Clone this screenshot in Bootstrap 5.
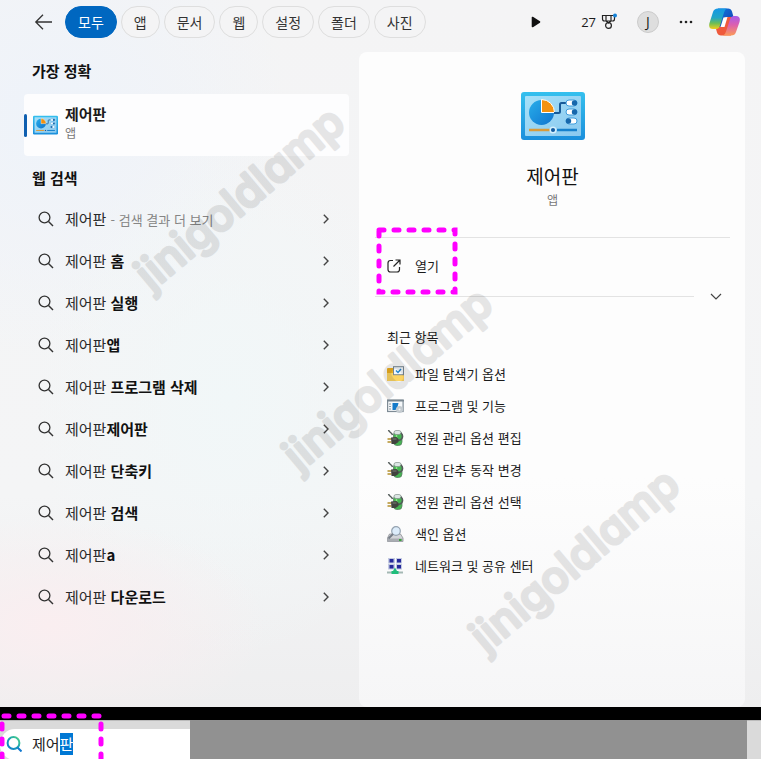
<!DOCTYPE html>
<html lang="ko">
<head>
<meta charset="utf-8">
<meta name="viewport" content="width=device-width, initial-scale=1">
<title>제어판 - 검색</title>
<link rel="stylesheet" href="https://cdn.jsdelivr.net/npm/bootstrap@5.3.0/dist/css/bootstrap.min.css">
<style>
body{font-family:"Noto Sans CJK KR","Noto Sans",sans-serif;font-size:15px;line-height:22px;color:#1b1b1b;background:#000;overflow-x:hidden}
button{font-family:inherit}
.flyout{background:
 radial-gradient(ellipse 220px 110px at 50px 625px,#faeef0 0,#faeef000 100%),
 radial-gradient(ellipse 200px 260px at 230px 400px,#f1f7f8 0,#f1f7f800 100%),
 radial-gradient(ellipse 240px 240px at 50px 120px,#eef3fa 0,#eef3fa00 100%),
 linear-gradient(#f4f4f5 0,#f4f5f6 70%,#eeeeef 100%)}
.topbar{height:43px;padding:0 21px 0 34px}
.pill{height:32px;padding:0 12px;border:1px solid #dedede;border-radius:16px;background:#f4f4f5;color:#333;font-size:14px;line-height:28px}
.pill.active{background:#0067c0;border-color:#0067c0;color:#fff}
.plain{border:0;background:none;padding:0;color:#1b1b1b;display:flex;align-items:center}
.tools{margin-left:auto}
.avatar{width:22px;height:22px;border-radius:50%;background:#dedede;border:1px solid #cbcbcb;justify-content:center;font:14px/20px "Open Sans",sans-serif}
.points{font:13px/20px "Open Sans",sans-serif;gap:5px}
.panes{display:grid;grid-template-columns:minmax(0,359fr) minmax(0,386fr);margin:9px 16px 0 0}
.results{padding:8px 10px 40px 24px}
.results h2{font-size:15px;line-height:22px;font-weight:700;margin:0 0 0 8px;color:#111}
.best{width:100%;height:62px;margin:12px 0 11px;background:#fdfdfe;border-radius:4px;text-align:left;gap:7px}
.accent{width:3px;height:23px;background:#0f5fb0;border-radius:2px;margin-right:-1px}
.best strong{display:block;line-height:20px}
.best .names{padding-bottom:4px}
.tiny{display:block;font-size:12px;line-height:18px;color:#777}
.hits{padding-top:9px}
.hit{height:42px;width:100%;padding:0 20px 0 14px;text-align:left;gap:11px}
.hit .words{flex:1;color:#2a2a2a;white-space:nowrap;line-height:22px}
.hit b{color:#111}
.more{font-size:13px;color:#858585}
.detail{padding:40px 15px 20px 16px;border-radius:8px;background:linear-gradient(#fdfdfd 0,#fdfdfd 65%,#f6f6f7 100%)}
.detail h1{font-size:19px;line-height:24px;font-weight:400;margin:24px 0 3px;color:#111}
.rule{border-top:1px solid #e3e3e3}
.open-row{height:55px;padding-left:12px}
.open-btn{gap:14px;height:32px;font-size:13px}
.recent h3{font-size:13px;line-height:22px;font-weight:400;margin:26px 0 10px 12px}
.recent-item{height:32px;padding-left:12px;gap:11px;font-size:13px}
.dash{fill:none;stroke:#f0f;stroke-width:5;stroke-linecap:round;stroke-dasharray:5 10}
.mark-open{position:absolute;left:0;top:-12px}
.taskbar{display:grid;grid-template-columns:minmax(0,190fr) minmax(0,557fr);margin-top:13px;height:39px;background:#dadada;border-top:1px solid #bbb;padding-right:14px}
.searchbox{height:31px;margin-top:8px;background:#fff;border-radius:15px 0 0 15px;padding:0 0 2px 6px;gap:10px}
.searchbox input{border:0;outline:0;padding:0;min-width:0;width:100%;background:none;color:#222;font:15px/22px "Noto Sans CJK KR",sans-serif}
.searchbox input::selection{background:#0078d4;color:#fff}
.masked{background:#919191;margin-top:-1px}
.mark-search{position:absolute;left:0;bottom:0}
.wm{position:absolute;width:280px;height:280px;pointer-events:none;opacity:.09}
.wm text{font:500 44px Inter,sans-serif;font-feature-settings:"cv11";stroke:#000;stroke-width:3;stroke-linejoin:round;text-anchor:middle}
.wm1{left:103px;top:62px}.wm2{left:251px;top:243px}.wm3{left:438px;top:424px}
</style>
<script src="https://cdn.jsdelivr.net/npm/bootstrap@5.3.0/dist/js/bootstrap.bundle.min.js"></script>
</head>
<body class="min-vh-100 d-flex flex-column position-relative">
<svg width="0" height="0" class="position-absolute" aria-hidden="true">
 <defs>
  <linearGradient id="gFrame" x2="0" y2="1"><stop stop-color="#35c0ee"/><stop offset="1" stop-color="#1b8fdc"/></linearGradient>
  <linearGradient id="gScreen" x2="1" y2="1"><stop stop-color="#a5e0f8"/><stop offset="1" stop-color="#8bc9ef"/></linearGradient>
  <linearGradient id="gPie" x2="1" y2="1"><stop stop-color="#28aeea"/><stop offset="1" stop-color="#0f74cf"/></linearGradient>
  <linearGradient id="gA" x2="0" y2="1"><stop stop-color="#1597e5"/><stop offset=".45" stop-color="#22a6c6"/><stop offset=".72" stop-color="#6dbd55"/><stop offset="1" stop-color="#f2ce1c"/></linearGradient>
  <linearGradient id="gB" x2="0" y2="1"><stop stop-color="#a85bea"/><stop offset=".45" stop-color="#dc5fb0"/><stop offset="1" stop-color="#fb9a58"/></linearGradient>
  <linearGradient id="gC" x2="1" y2="1"><stop stop-color="#0f7be0"/><stop offset="1" stop-color="#173cae"/></linearGradient>
  <linearGradient id="gLens" x1="1" x2="0" y2="1"><stop stop-color="#50d486"/><stop offset=".5" stop-color="#16a0b5"/><stop offset="1" stop-color="#1279cf"/></linearGradient>
  <symbol id="cpl" viewBox="0 0 64 48">
   <rect width="64" height="48" rx="3" fill="url(#gFrame)"/><rect x="4" y="4" width="56" height="40" rx="1" fill="url(#gScreen)"/>
   <circle cx="20.500" cy="20.500" r="12.500" fill="url(#gPie)"/><path d="M20.500 7.500a13 13 0 0 1 13 13h-13z" fill="#f3920f" stroke="#fff"/>
   <path d="M33 21h4.500q1.500 0 1.500-1.500v-7q0-1.500 1.500-1.500H45" fill="none" stroke="#175b99" stroke-width="2"/>
   <g stroke="#3f9ddd"><rect x="45" y="8" width="11" height="6" rx="3" fill="#fff"/><rect x="45" y="17" width="11" height="6" rx="3" fill="#fff"/><rect x="45" y="26" width="11" height="6" rx="3" fill="#fff"/></g>
   <circle cx="53.500" cy="11" r="2.700" fill="#1768ac"/><circle cx="53.500" cy="20" r="2.700" fill="#1768ac"/><circle cx="47.500" cy="29" r="2.700" fill="#1768ac"/>
   <path d="M8 38h22" stroke="#d99b3a" stroke-width="2.500"/><path d="M36 38h20" stroke="#1681cd" stroke-width="2.500"/><circle cx="32" cy="38" r="2.800" fill="#145ca2" stroke="#d3effd" stroke-width="1.500"/>
  </symbol>
  <symbol id="lens" viewBox="0 0 16 16"><circle cx="6.500" cy="6.500" r="5.400" fill="none" stroke="#333" stroke-width="1.300"/><path d="M10.500 10.500 15 15" stroke="#333" stroke-width="1.400"/></symbol>
  <symbol id="chev" viewBox="0 0 6 10"><path d="M.8.800 5 5 .800 9.200" fill="none" stroke="#444" stroke-width="1.400"/></symbol>
  <symbol id="plug" viewBox="0 0 16 16">
   <rect x="6" y="1.500" width="8.500" height="14" rx="3.500" fill="#45b451" stroke="#5c8064" stroke-width=".8"/><rect x="6.500" y=".5" width="7" height="4" rx="2" fill="#dce6e4" stroke="#85928d" stroke-width=".7"/><path d="M9 5v4" stroke="#8be886" stroke-width="1.500"/>
   <path d="M1 0c1 3 3 2 4 5M13.500 3c3 3 1.500 7-3 7.500" fill="none" stroke="#535b59" stroke-width="1.500"/>
   <path d="M0 9h4M0 12h4" stroke="#b28f2b" stroke-width="1.600"/><path d="M3.500 7.500 9 7l2 2v3l-3 2H4z" fill="#41433f"/><path d="M5 9h4" stroke="#7c7f79"/>
  </symbol>
 </defs>
</svg>

<main class="flyout flex-grow-1 d-flex flex-column">
 <header class="topbar d-flex align-items-center">
  <button class="plain" aria-label="뒤로"><svg width="19" height="16" viewBox="0 0 19 16" fill="none" stroke="#333" stroke-width="1.300"><path d="M18 8H2M9 .8 1.800 8 9 15.200"/></svg></button>
  <nav class="d-flex gap-1 ms-2 ps-1" aria-label="범위">
   <button class="pill active">모두</button><button class="pill">앱</button><button class="pill">문서</button><button class="pill">웹</button><button class="pill">설정</button><button class="pill">폴더</button><button class="pill">사진</button>
  </nav>
  <div class="tools d-flex align-items-center">
   <button class="plain me-4" aria-label="더 많은 범위"><svg width="10" height="12" viewBox="0 0 10 12"><path d="M1.500 1.500v9L8.500 6z" fill="#111" stroke="#111" stroke-width="1.600" stroke-linejoin="round"/></svg></button>
   <button class="plain points ms-3 me-3"><span>27</span><svg width="16" height="17" viewBox="0 0 16 17" fill="none" stroke="#222" stroke-width="1.200"><path d="M1.500 2.500h12v3.500q0 2-2 2h-8q-2 0-2-2zM5 2.500V8l2.500 2L10 8V2.500"/><circle cx="7.500" cy="12.500" r="2.900"/><circle cx="14" cy="2.500" r="2" fill="#1683d8" stroke="none"/></svg></button>
   <button class="plain avatar ms-1" aria-label="계정 J">J</button>
   <button class="plain mx-3 ps-1" aria-label="옵션"><svg width="14" height="4" fill="#222"><circle cx="2" cy="2" r="1.300"/><circle cx="7" cy="2" r="1.300"/><circle cx="12" cy="2" r="1.300"/></svg></button>
   <button class="plain" aria-label="Copilot"><svg width="31" height="28" viewBox="0 0 31 28">
    <path d="M9 .5h10q3 0 4 3l1.500 5.500H21q-3 0-4 3l-2 7H8z" fill="url(#gC)"/>
    <path d="M22 27.500H12q-3 0-4-3L6.500 19H10q3 0 4-3l2-7h7z" fill="#ef5a3c"/>
    <path d="m14.500 9.500 4-.5-3 10h-4z" fill="#fff"/>
    <path d="M9 .5h9q-2 .5-3 4l-4 13q-1 3.500-4 3.500H4q-5 0-3.500-6L4 4q1-3.500 5-3.500z" fill="url(#gA)"/>
    <path d="M22 27.500h-8q2-.5 3-4l4-12q1-3.500 4-3.500h2q5 0 3.500 6L27 24q-1 3.500-5 3.500z" fill="url(#gB)"/></svg></button>
  </div>
 </header>

 <div class="panes flex-grow-1">
  <section class="results">
   <h2>가장 정확</h2>
   <button class="plain best"><span class="accent"></span><svg width="25" height="20"><use href="#cpl"/></svg><span class="names"><strong>제어판</strong><span class="tiny">앱</span></span></button>
   <h2>웹 검색</h2>
   <div class="hits">
    <button class="plain hit"><svg width="16" height="16"><use href="#lens"/></svg><span class="words">제어판 <span class="more">- 검색 결과 더 보기</span></span><svg width="6" height="10"><use href="#chev"/></svg></button>
    <button class="plain hit"><svg width="16" height="16"><use href="#lens"/></svg><span class="words">제어판 <b>홈</b></span><svg width="6" height="10"><use href="#chev"/></svg></button>
    <button class="plain hit"><svg width="16" height="16"><use href="#lens"/></svg><span class="words">제어판 <b>실행</b></span><svg width="6" height="10"><use href="#chev"/></svg></button>
    <button class="plain hit"><svg width="16" height="16"><use href="#lens"/></svg><span class="words">제어판<b>앱</b></span><svg width="6" height="10"><use href="#chev"/></svg></button>
    <button class="plain hit"><svg width="16" height="16"><use href="#lens"/></svg><span class="words">제어판 <b>프로그램 삭제</b></span><svg width="6" height="10"><use href="#chev"/></svg></button>
    <button class="plain hit"><svg width="16" height="16"><use href="#lens"/></svg><span class="words">제어판<b>제어판</b></span><svg width="6" height="10"><use href="#chev"/></svg></button>
    <button class="plain hit"><svg width="16" height="16"><use href="#lens"/></svg><span class="words">제어판 <b>단축키</b></span><svg width="6" height="10"><use href="#chev"/></svg></button>
    <button class="plain hit"><svg width="16" height="16"><use href="#lens"/></svg><span class="words">제어판 <b>검색</b></span><svg width="6" height="10"><use href="#chev"/></svg></button>
    <button class="plain hit"><svg width="16" height="16"><use href="#lens"/></svg><span class="words">제어판<b>a</b></span><svg width="6" height="10"><use href="#chev"/></svg></button>
    <button class="plain hit"><svg width="16" height="16"><use href="#lens"/></svg><span class="words">제어판 <b>다운로드</b></span><svg width="6" height="10"><use href="#chev"/></svg></button>
   </div>
  </section>

  <section class="detail">
   <div class="text-center pb-4 mb-1">
    <svg width="64" height="48" class="d-block mx-auto"><use href="#cpl"/></svg>
    <h1>제어판</h1><span class="tiny">앱</span>
   </div>
   <div class="rule"></div>
   <div class="open-row d-flex align-items-center position-relative">
    <button class="plain open-btn"><svg width="14" height="14" viewBox="0 0 14 14" fill="none" stroke="#222" stroke-width="1.200"><path d="M6 1.500H3.500Q1 1.500 1 4v6.500Q1 13 3.500 13H10q2.500 0 2.500-2.500V8M8.500 1H13v4.500M13 1 6.500 7.500"/></svg>열기</button>
    <svg class="mark-open" width="86" height="74"><rect class="dash" x="4" y="4" width="76" height="62"/></svg>
   </div>
   <div class="d-flex align-items-center"><div class="rule flex-grow-1"></div><button class="plain ms-3 me-2" aria-label="확장"><svg width="12" height="7" viewBox="0 0 12 7" fill="none" stroke="#444" stroke-width="1.200"><path d="m1 1 5 5 5-5"/></svg></button></div>
   <div class="recent">
    <h3>최근 항목</h3>
    <button class="plain recent-item"><svg width="17" height="16" viewBox="0 0 17 16"><path d="M0 3q0-1 1-1h5l1 2h9v11H1q-1 0-1-1z" fill="#edaf22"/><path d="M0 7h17v8H1q-1 0-1-1z" fill="#fcd462"/><rect x="6.500" y=".7" width="10" height="8" fill="#f3f9fd" stroke="#7b8994"/><path d="m9 4.500 2 2L14 3" fill="none" stroke="#2083cf" stroke-width="1.400"/></svg>파일 탐색기 옵션</button>
    <button class="plain recent-item"><svg width="17" height="16" viewBox="0 0 17 16"><rect x=".6" y="2" width="15.500" height="11.500" fill="#f4f7f9" stroke="#7e8b95" stroke-width="1.200"/><path d="M0 2.700h17" stroke="#798690" stroke-width="1.600"/><path d="M2 6h2M2 8.500h2M2 11h2" stroke="#8d9aa4"/><path d="M5.500 5h6l-1 4-2 3h-3z" fill="#147ac9"/><circle cx="12.500" cy="11.500" r="3.500" fill="#c4cbd0"/><circle cx="12.500" cy="11.500" r="1" fill="#f5f5f5"/></svg>프로그램 및 기능</button>
    <button class="plain recent-item"><svg width="17" height="16"><use href="#plug"/></svg>전원 관리 옵션 편집</button>
    <button class="plain recent-item"><svg width="17" height="16"><use href="#plug"/></svg>전원 단추 동작 변경</button>
    <button class="plain recent-item"><svg width="17" height="16"><use href="#plug"/></svg>전원 관리 옵션 선택</button>
    <button class="plain recent-item"><svg width="17" height="16" viewBox="0 0 17 16"><path d="M2.500 8h11l2.500 4v3.500H.5V12z" fill="#d3d5d9" stroke="#8b8d93" stroke-width=".8"/><path d="M.5 12.500H16v3H.5z" fill="#a9acb2"/><circle cx="9" cy="5" r="4.300" fill="#dcecfa" stroke="#94a2b0" stroke-width="1.200"/><path d="m6 8-4.500 4.500" stroke="#777e88" stroke-width="2"/><path d="M12 14h2.500" stroke="#3ca33c" stroke-width="2"/></svg>색인 옵션</button>
    <button class="plain recent-item"><svg width="17" height="16" viewBox="0 0 17 16"><g fill="#c4cbe2"><rect x="1" width="7" height="5.500"/><rect x="9" width="6" height="5.500"/><rect x="1" y="6" width="7" height="5.500"/><rect x="9" y="6" width="6" height="5.500"/></g><g fill="#25299a"><rect x="2.500" y="1" width="4" height="3.500"/><rect x="10" y="1" width="4" height="3.500"/><rect x="2.500" y="7" width="4" height="3.500"/><rect x="10" y="7" width="4" height="3.500"/></g><path d="M0 14.500h16" stroke="#a4b8b4" stroke-width="2"/><path d="M8 9.500 10 13h1.500v3h-7v-3H6z" fill="#20bd7b"/></svg>네트워크 및 공유 센터</button>
   </div>
  </section>
 </div>
</main>

<footer class="taskbar">
 <label class="searchbox d-flex align-items-center"><svg width="16" height="16" viewBox="0 0 16 16" class="flex-shrink-0" fill="none" stroke="url(#gLens)" stroke-width="2"><circle cx="7.500" cy="7" r="5.900"/><path d="m11.500 11.500 4 4" stroke="#1279cf"/></svg><input id="q" type="text" value="제어판" aria-label="검색"></label>
 <div class="masked"></div>
</footer>
<svg class="mark-search" width="106" height="46"><path class="dash" d="M2 46V3h99v43"/></svg>

<svg class="wm wm1" viewBox="0 0 280 280"><text transform="translate(140 140) rotate(-40)" y="10">jinigoldlamp</text></svg>
<svg class="wm wm2" viewBox="0 0 280 280"><text transform="translate(140 140) rotate(-40)" y="10">jinigoldlamp</text></svg>
<svg class="wm wm3" viewBox="0 0 280 280"><text transform="translate(140 140) rotate(-40)" y="10">jinigoldlamp</text></svg>
<script>
const q = document.getElementById('q');
q.focus();
q.setSelectionRange(2, 3);
</script>
</body>
</html>
